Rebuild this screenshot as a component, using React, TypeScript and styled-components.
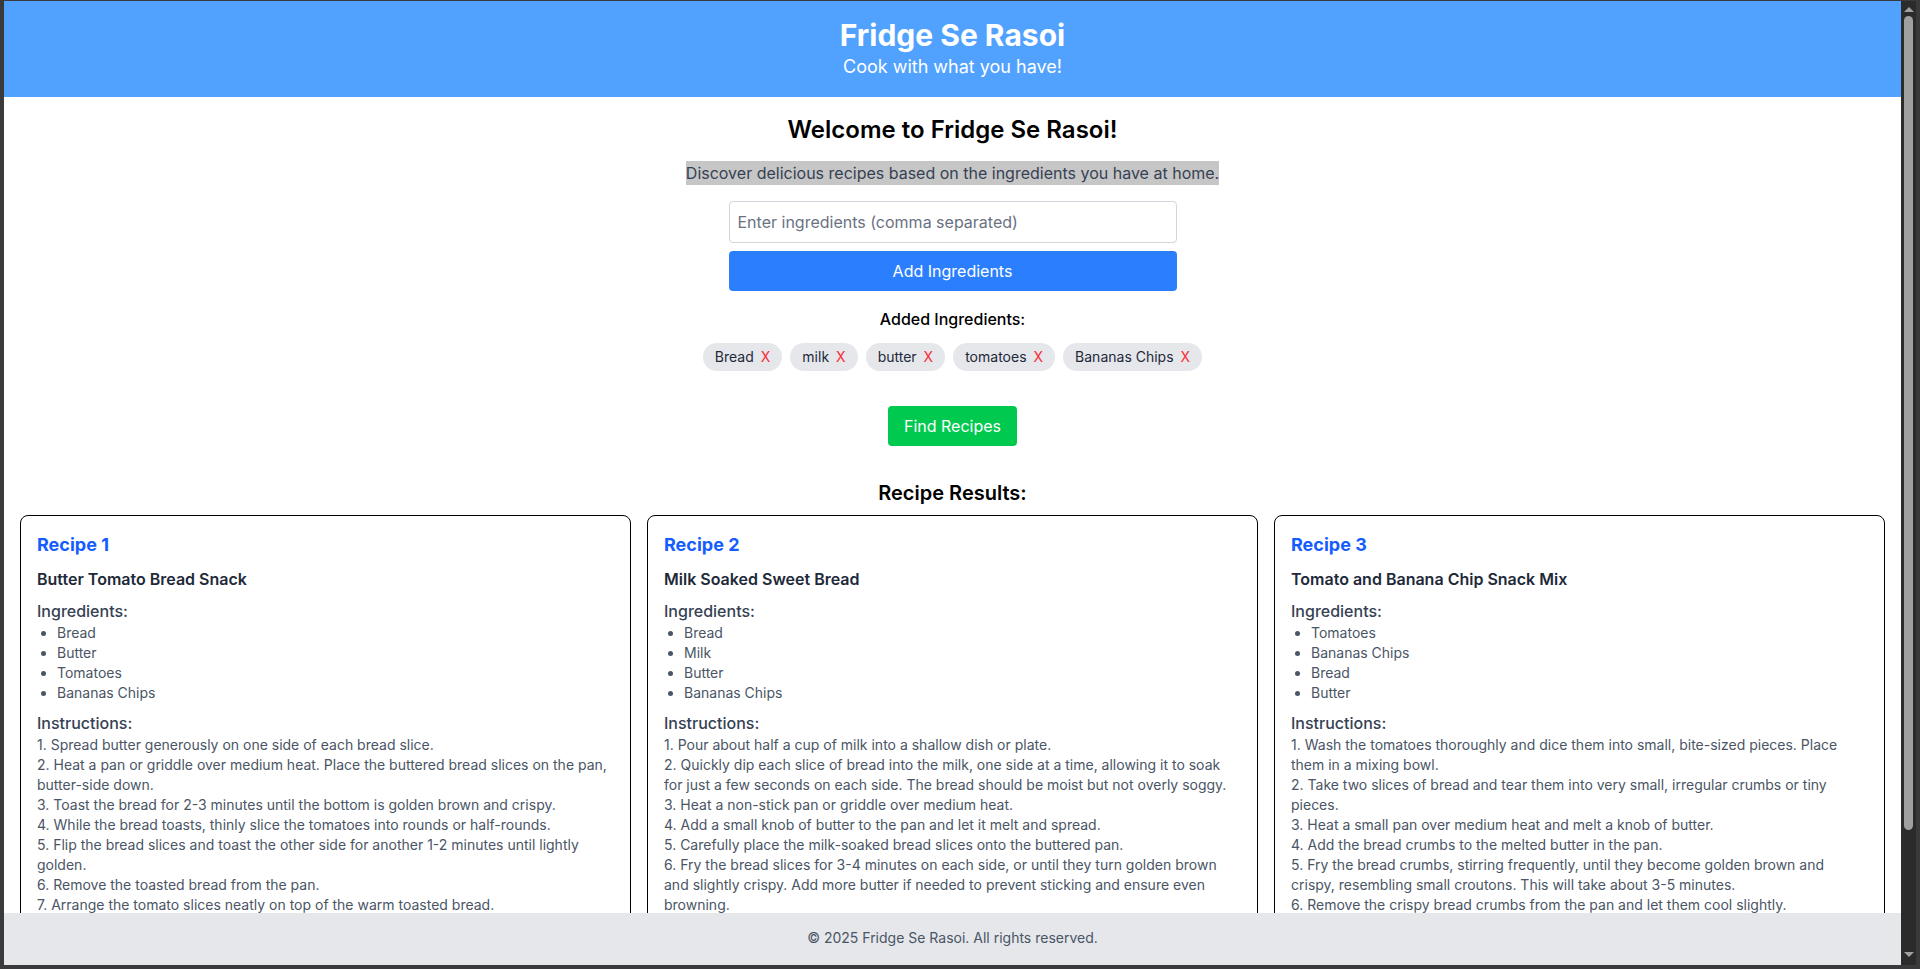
import styled, { createGlobalStyle } from "styled-components";

const GlobalStyle = createGlobalStyle`
  html, body {
    margin: 0;
    height: 100%;
    overflow: hidden;
    background: #3a3a3c;
  }
  body {
    font-family: Inter, "Noto Sans", "Liberation Sans", sans-serif;
    -webkit-font-smoothing: antialiased;
  }
  * {
    box-sizing: border-box;
  }
`;

const recipes = [
  {
    name: "Butter Tomato Bread Snack",
    ingredients: ["Bread", "Butter", "Tomatoes", "Bananas Chips"],
    steps: [
      "Spread butter generously on one side of each bread slice.",
      "Heat a pan or griddle over medium heat. Place the buttered bread slices on the pan, butter-side down.",
      "Toast the bread for 2-3 minutes until the bottom is golden brown and crispy.",
      "While the bread toasts, thinly slice the tomatoes into rounds or half-rounds.",
      "Flip the bread slices and toast the other side for another 1-2 minutes until lightly golden.",
      "Remove the toasted bread from the pan.",
      "Arrange the tomato slices neatly on top of the warm toasted bread.",
      "Crush a handful of banana chips and sprinkle them over the tomatoes.",
      "Serve immediately while the bread is still warm.",
    ],
  },
  {
    name: "Milk Soaked Sweet Bread",
    ingredients: ["Bread", "Milk", "Butter", "Bananas Chips"],
    steps: [
      "Pour about half a cup of milk into a shallow dish or plate.",
      "Quickly dip each slice of bread into the milk, one side at a time, allowing it to soak for just a few seconds on each side. The bread should be moist but not overly soggy.",
      "Heat a non-stick pan or griddle over medium heat.",
      "Add a small knob of butter to the pan and let it melt and spread.",
      "Carefully place the milk-soaked bread slices onto the buttered pan.",
      "Fry the bread slices for 3-4 minutes on each side, or until they turn golden brown and slightly crispy. Add more butter if needed to prevent sticking and ensure even browning.",
      "Top with crushed banana chips and serve warm.",
    ],
  },
  {
    name: "Tomato and Banana Chip Snack Mix",
    ingredients: ["Tomatoes", "Bananas Chips", "Bread", "Butter"],
    steps: [
      "Wash the tomatoes thoroughly and dice them into small, bite-sized pieces. Place them in a mixing bowl.",
      "Take two slices of bread and tear them into very small, irregular crumbs or tiny pieces.",
      "Heat a small pan over medium heat and melt a knob of butter.",
      "Add the bread crumbs to the melted butter in the pan.",
      "Fry the bread crumbs, stirring frequently, until they become golden brown and crispy, resembling small croutons. This will take about 3-5 minutes.",
      "Remove the crispy bread crumbs from the pan and let them cool slightly.",
      "Add the banana chips and the bread crumbs to the tomatoes and toss gently.",
      "Serve right away as a crunchy snack.",
    ],
  },
];

const addedIngredients = ["Bread", "milk", "butter", "tomatoes", "Bananas Chips"];

// browser window: page on the left, scroll bar on the right
const BrowserFrame = styled.div`
  display: flex;
  height: 100vh;
  padding: 1px 4px 4px 4px;
  background: #3a3a3c;
`;

const Viewport = styled.div`
  position: relative;
  flex: 1;
  min-width: 0;
  background: #fff;
  overflow: hidden;
`;

const ScrollTrack = styled.div`
  width: 15px;
  display: flex;
  flex-direction: column;
  align-items: center;
  background: #2b2b2b;
`;

const Arrow = styled.div<{ $dir: "up" | "down" }>`
  width: 0;
  height: 0;
  margin: ${({ $dir }) => ($dir === "up" ? "6px 0 4px" : "auto 0 8px")};
  border-left: 5px solid transparent;
  border-right: 5px solid transparent;
  ${({ $dir }) =>
    $dir === "up"
      ? "border-bottom: 5px solid #a0a0a0;"
      : "border-top: 5px solid #a0a0a0;"}
`;

const Thumb = styled.div`
  width: 9px;
  height: 814px;
  border-radius: 5px;
  background: #a0a0a0;
`;

const Header = styled.header`
  background: #51a2ff;
  color: #fff;
  text-align: center;
  padding: 16px;
`;

const Title = styled.h1`
  margin: 0;
  font-size: 30px;
  line-height: 36px;
  font-weight: 700;
`;

const Tagline = styled.p`
  margin: 0;
  font-size: 18px;
  line-height: 28px;
`;

const Main = styled.main`
  display: flex;
  flex-direction: column;
  align-items: center;
  padding: 17px 16px 80px;
`;

const Welcome = styled.h2`
  margin: 0 0 15px;
  font-size: 24px;
  line-height: 32px;
  font-weight: 600;
  color: #000;
`;

const Intro = styled.p`
  margin: 0 0 16px;
  font-size: 16px;
  line-height: 24px;
  color: #364153;
  background: #c6c6c6;
`;

const Form = styled.div`
  width: 448px;
  display: flex;
  flex-direction: column;
  gap: 8px;
`;

const Input = styled.input`
  width: 100%;
  padding: 8px;
  border: 1px solid #d1d5dc;
  border-radius: 4px;
  font: inherit;
  font-size: 16px;
  line-height: 24px;
  color: #1e2939;
  outline: none;

  &::placeholder {
    color: #6a7282;
  }
`;

const Button = styled.button<{ $tone: "blue" | "green" }>`
  border: none;
  border-radius: 4px;
  padding: 8px 16px;
  font: inherit;
  font-size: 16px;
  line-height: 24px;
  color: #fff;
  cursor: pointer;
  background: ${({ $tone }) => ($tone === "blue" ? "#2b7fff" : "#00c950")};
`;

const AddedTitle = styled.h3`
  margin: 16px 0 0;
  font-size: 16px;
  line-height: 24px;
  font-weight: 500;
  color: #000;
`;

const ChipList = styled.div`
  display: flex;
  flex-wrap: wrap;
  justify-content: center;
  gap: 8px;
  margin: 12px 0 35px;
`;

const Chip = styled.span`
  display: inline-flex;
  align-items: center;
  background: #e5e7eb;
  border-radius: 9999px;
  padding: 4px 12px;
  font-size: 14px;
  line-height: 20px;
  color: #1e2939;
`;

const RemoveMark = styled.span`
  margin-left: 7px;
  color: #fb2c36;
`;

const ResultsTitle = styled.h3`
  margin: 33px 0 8px;
  font-size: 20px;
  line-height: 28px;
  font-weight: 600;
  color: #000;
`;

const CardGrid = styled.div`
  width: 100%;
  display: grid;
  grid-template-columns: repeat(3, 1fr);
  gap: 16px;
`;

const Card = styled.article`
  border: 1px solid #000;
  border-radius: 8px;
  padding: 15px 16px 16px;
`;

const CardLabel = styled.h4`
  margin: 0 0 8px;
  font-size: 18px;
  line-height: 28px;
  font-weight: 700;
  color: #155dfc;
`;

const RecipeName = styled.h5`
  margin: 0 0 8px;
  font-size: 16px;
  line-height: 24px;
  font-weight: 600;
  color: #1e2939;
`;

const SectionTitle = styled.h6`
  margin: 0;
  font-size: 16px;
  line-height: 24px;
  font-weight: 500;
  color: #364153;
`;

const IngredientList = styled.ul`
  margin: 0 0 8px;
  padding-left: 20px;
  list-style: disc;
  font-size: 14px;
  line-height: 20px;
  color: #4a5565;
`;

const Steps = styled.div`
  font-size: 14px;
  line-height: 20px;
  color: #4a5565;
`;

const Footer = styled.footer`
  position: absolute;
  left: 0;
  right: 0;
  bottom: 0;
  padding: 15px 0 17px;
  text-align: center;
  background: #e5e7eb;
  font-size: 14px;
  line-height: 20px;
  color: #4a5565;
`;

export default function App() {
  return (
    <>
      <GlobalStyle />
      <BrowserFrame>
        <Viewport>
          <Header>
            <Title>Fridge Se Rasoi</Title>
            <Tagline>Cook with what you have!</Tagline>
          </Header>
          <Main>
            <Welcome>Welcome to Fridge Se Rasoi!</Welcome>
            <Intro>
              Discover delicious recipes based on the ingredients you have at
              home.
            </Intro>
            <Form>
              <Input placeholder="Enter ingredients (comma separated)" />
              <Button $tone="blue">Add Ingredients</Button>
            </Form>
            <AddedTitle>Added Ingredients:</AddedTitle>
            <ChipList>
              {addedIngredients.map((item) => (
                <Chip key={item}>
                  {item}
                  <RemoveMark>X</RemoveMark>
                </Chip>
              ))}
            </ChipList>
            <Button $tone="green">Find Recipes</Button>
            <ResultsTitle>Recipe Results:</ResultsTitle>
            <CardGrid>
              {recipes.map((recipe, i) => (
                <Card key={recipe.name}>
                  <CardLabel>Recipe {i + 1}</CardLabel>
                  <RecipeName>{recipe.name}</RecipeName>
                  <SectionTitle>Ingredients:</SectionTitle>
                  <IngredientList>
                    {recipe.ingredients.map((ing) => (
                      <li key={ing}>{ing}</li>
                    ))}
                  </IngredientList>
                  <SectionTitle>Instructions:</SectionTitle>
                  <Steps>
                    {recipe.steps.map((step, n) => (
                      <div key={n}>
                        {n + 1}. {step}
                      </div>
                    ))}
                  </Steps>
                </Card>
              ))}
            </CardGrid>
          </Main>
          <Footer>© 2025 Fridge Se Rasoi. All rights reserved.</Footer>
        </Viewport>
        <ScrollTrack>
          <Arrow $dir="up" />
          <Thumb />
          <Arrow $dir="down" />
        </ScrollTrack>
      </BrowserFrame>
    </>
  );
}
